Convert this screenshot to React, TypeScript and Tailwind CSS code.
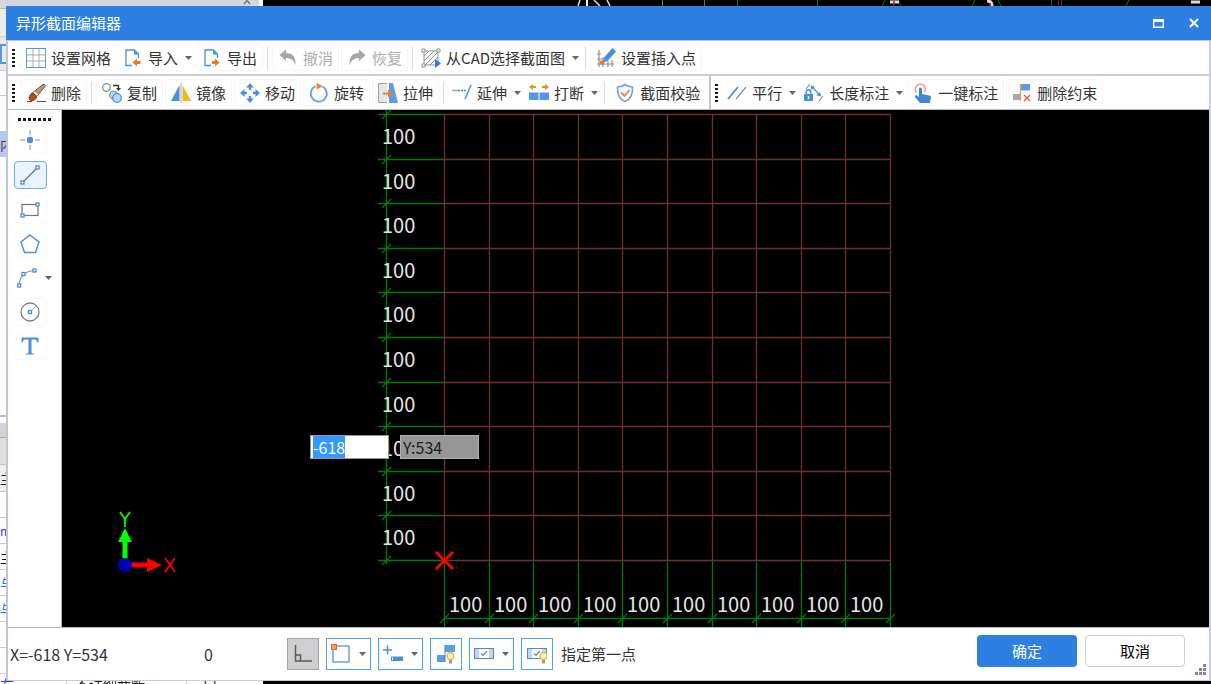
import { useEffect, useRef, type ReactNode } from "react";

const BLUE = "#4a8fdc";
const GREY = "#8a9097";

function Icon({ children }: { children: ReactNode }) {
    return (
        <svg width="20" height="20" viewBox="0 0 20 20" fill="none" className="shrink-0" aria-hidden="true">
            {children}
        </svg>
    );
}

/* ---------- toolbar icons ---------- */

const GridIcon = () => (
    <Icon>
        <path d="M7 1v18M13 1v18M1 7h18M1 13h18" stroke="#a9adb3" />
        <rect x="0.5" y="0.5" width="19" height="19" stroke="#5a97dd" />
    </Icon>
);

const ImportIcon = () => (
    <Icon>
        <path d="M9 17.5H3V2h8.500l4 4v4" stroke={BLUE} strokeWidth="1.300" />
        <path d="M11 2v4.500h4.500z" fill={BLUE} />
        <path d="M9.500 14.500 14 10.500v2.500h3.500v3H14v2.500z" fill="#f47521" />
    </Icon>
);

const ExportIcon = () => (
    <Icon>
        <path d="M9 17.500H3V2h8.500l4 4v4" stroke={BLUE} strokeWidth="1.300" />
        <path d="M11 2v4.500h4.500z" fill={BLUE} />
        <path d="M17.500 14.500 13 10.500v2.500h-3v3h3v2.500z" fill="#f47521" />
    </Icon>
);

const UndoIcon = () => (
    <Icon>
        <path d="M1.500 7 8 1.500V5c6.500 0 10 3.500 9.500 12.500C16 12.500 13 10 8 10v3z" fill="#a6a6a6" />
    </Icon>
);

const RedoIcon = () => (
    <Icon>
        <path d="M18.500 7 12 1.500V5C5.500 5 2 8.500 2.500 17.500 4 12.500 7 10 12 10v3z" fill="#a6a6a6" />
    </Icon>
);

const CadIcon = () => (
    <Icon>
        <rect x="3" y="3" width="14" height="14" stroke={GREY} />
        <path d="M3 8 8 3M3 13 13 3M4 17 17 4M9 17l8-8" stroke={GREY} />
        <path d="M1 1h3v3H1zM16 1h3v3h-3zM1 16h3v3H1z" fill="#fff" stroke={GREY} />
        <path d="M14 11v9l6-4.500z" fill="#2f7cda" />
    </Icon>
);

const InsertPointIcon = () => (
    <Icon>
        <path d="M3 2v17M7 9v10M12 13v6M1 6h4M1 11h5M1 16h17M16 12v7" stroke={GREY} strokeWidth="1.200" />
        <path d="M16.500 0 20 3.500 11.500 13 8 9.500z" fill={BLUE} />
        <path d="m8 9.500 3.500 3.500-5 2z" fill={BLUE} />
        <circle cx="6" cy="14.500" r="2.200" fill="#f47521" />
    </Icon>
);

const EraseIcon = () => (
    <Icon>
        <path d="M1 18.500h5M11 18.500h9" stroke="#555" strokeWidth="1.200" />
        <path d="M17 1.500c1.500-.5 2.500.5 2 2L11 13l-4-3.500z" fill="#c59a63" stroke="#6b5540" />
        <path d="m9 7.500 4 3.500-2 2.500-4.500-3.500z" fill="#e8e6e3" stroke="#555" strokeWidth=".7" />
        <path d="M6 10c2 .5 4 2 4.500 4-1 3-4 4.500-6 3.500S2.500 13 6 10z" fill="#be4716" stroke="#5c3a2a" />
    </Icon>
);

const CopyIcon = () => (
    <Icon>
        <circle cx="4.500" cy="4.500" r="3.800" fill="#fff" stroke={GREY} strokeWidth="1.300" />
        <path d="M11 2.500h5.500V6" stroke="#333" strokeWidth="1.300" />
        <path d="M14 5h5l-2.500 3z" fill="#333" />
        <circle cx="11.500" cy="12" r="4" fill="#b9d8f4" stroke="#4f94d4" />
        <circle cx="15" cy="15" r="4.300" fill="#b9d8f4" stroke="#4f94d4" strokeWidth="1.300" />
    </Icon>
);

const MirrorIcon = () => (
    <Icon>
        <path d="M8.500 2v16H0z" fill={BLUE} />
        <path d="M11.500 2v16H20z" fill="#fdb515" />
        <path d="M10 0v20" stroke="#a9adb3" />
    </Icon>
);

const MoveIcon = () => (
    <Icon>
        <path d="M10 0l4 4.500h-2.800V7H8.800V4.500H6zM10 20l4-4.500h-2.800V13H8.800v2.500H6zM0 10l4.500-4v2.800H7v2.400H4.500V14zM20 10l-4.500-4v2.800H13v2.400h2.500V14z" fill={BLUE} />
    </Icon>
);

const RotateIcon = () => (
    <Icon>
        <path d="M13.500 3.500a8 8 0 1 1-7-.2" stroke="#68a2e3" strokeWidth="1.800" />
        <path d="M7.500 0v6.500L14 3.300z" fill="#ef8a1d" />
    </Icon>
);

const StretchIcon = () => (
    <Icon>
        <path d="M9 .5H.5v19H9" fill="#e3e4ec" stroke="#9ba0a8" />
        <path d="M11 0h4l5 20h-9z" fill="#5b9ce8" />
        <path d="M5 9.500h5V6.500l5 4-5 4v-3H5z" fill="#f17a2a" />
    </Icon>
);

const ExtendIcon = () => (
    <Icon>
        <path d="M0 7.500h6" stroke="#a3a8ae" strokeWidth="1.500" />
        <path d="M6 7.500h8" stroke={BLUE} strokeWidth="1.500" strokeDasharray="2 1" />
        <path d="m19 2-6 14" stroke={BLUE} strokeWidth="1.500" />
    </Icon>
);

const BreakIcon = () => (
    <Icon>
        <path d="M0 9.500h9.500V17H0zM10.500 9.500H20V17h-9.500z" fill="#5596e4" />
        <path d="M0 4l4-3v2h3v2H4v2zM20 4l-4-3v2h-3v2h3v2z" fill="#ef8a1d" />
    </Icon>
);

const ShieldIcon = () => (
    <Icon>
        <path d="M10 1.500c2.500 2 5 2.500 7.500 2.500.5 7-1.500 12-7.500 14.500C4 16 2 11 2.500 4 5 4 7.500 3.500 10 1.500z" fill="#f4f9ff" stroke="#6ea6e4" strokeWidth="1.700" />
        <path d="m6 9.500 3.500 3.500L14.500 7" stroke="#f17a3c" strokeWidth="1.800" />
    </Icon>
);

const ParallelIcon = () => (
    <Icon>
        <path d="M1 16 11 4" stroke={BLUE} strokeWidth="1.800" />
        <path d="M9 16 19 4" stroke={GREY} strokeWidth="1.300" />
    </Icon>
);

const LengthIcon = () => (
    <Icon>
        <path d="M2 6l4-5M15 18l4-5" stroke={GREY} strokeWidth="1.200" />
        <path d="m8 4 8 8" stroke={BLUE} strokeWidth="1.300" />
        <path d="M6.500 2.500 11 3.500 7.500 7zM17 13.500l-4.500-1L16 9z" fill={BLUE} />
        <path d="M0 11h9v7H0z" fill={BLUE} />
        <path d="M2.200 11V9a2.300 2.300 0 0 1 4.600 0v2" stroke={BLUE} strokeWidth="1.500" />
        <path d="M4.500 13v3" stroke="#fff" strokeWidth="1.500" />
    </Icon>
);

const TapIcon = () => (
    <Icon>
        <path d="M3.500 9.500a5 5 0 1 1 8-.5" stroke="#f3a07a" strokeWidth="1.600" />
        <path d="M6 6c0-1.800 3-1.800 3 0v5l7.500 1.500c1 .3 1.500 1 1.300 2L17 20H7l-5-6c-.8-1.300.8-2.300 2-1.500l2 1.500z" fill="#3f86d8" />
    </Icon>
);

const RemoveLinkIcon = () => (
    <Icon>
        <path d="M1 11h7v6H1z" fill="#a5aab2" />
        <path d="M9 1h9v6.500H9z" fill="#5b9ce8" />
        <path d="M8.500 1v17" stroke="#ef9a3d" strokeWidth="1.300" />
        <path d="m12 12 6 6m0-6-6 6" stroke="#e8543a" strokeWidth="1.300" />
    </Icon>
);

/* ---------- drawing tool icons ---------- */

const node = { width: 3, height: 3, fill: "#fff", stroke: BLUE, strokeWidth: 1.3 };

const PointIcon = () => (
    <Icon>
        <path d="M10 0v5M10 15v5M0 10h5M15 10h5" stroke={GREY} />
        <circle cx="10" cy="10" r="3.200" fill={BLUE} />
    </Icon>
);

const LineIcon = () => (
    <Icon>
        <path d="M3 17 17 3" stroke="#6c747c" strokeWidth="1.300" />
        <rect x="1" y="16" {...node} />
        <rect x="16" y="1" {...node} />
    </Icon>
);

const RectIcon = () => (
    <Icon>
        <rect x="2" y="4.500" width="16" height="11" stroke="#6c747c" strokeWidth="1.200" />
        <rect x="1" y="14" {...node} />
        <rect x="16" y="3" {...node} />
    </Icon>
);

const PolygonIcon = () => (
    <Icon>
        <path d="m10 1 9 7-3.500 10.500h-11L1 8z" stroke={BLUE} strokeWidth="1.400" />
    </Icon>
);

const ArcIcon = () => (
    <Icon>
        <path d="M2 17C2.500 9 8 3 17 2.500" stroke={GREY} strokeWidth="1.200" />
        <rect x="0.700" y="16" {...node} />
        <rect x="5" y="4.500" {...node} />
        <rect x="16" y="1" {...node} />
    </Icon>
);

const CircleIcon = () => (
    <Icon>
        <circle cx="10" cy="10" r="9" stroke="#7b828a" strokeWidth="1.300" />
        <path d="m10 10 5.500-5.500" stroke="#7fb0e8" />
        <rect x="8.500" y="8.500" {...node} />
    </Icon>
);

const TextIcon = () => (
    <Icon>
        <path d="M1.500 1.500h17v5h-1.200c-.3-2-1-3-3-3h-2.800V16c0 1 .5 1.500 2.500 1.500v1H6v-1c2 0 2.500-.5 2.500-1.500V3.500H5.700c-2 0-2.700 1-3 3H1.500z" fill={BLUE} />
    </Icon>
);

/* ---------- status bar icons ---------- */

const OrthoIcon = () => (
    <Icon>
        <path d="M2.500 1v16H19M2.500 11h5v6" stroke="#5c5c5c" strokeWidth="1.500" />
    </Icon>
);

const SnapIcon = () => (
    <Icon>
        <rect x="2" y="2" width="16" height="16" stroke="#5b92d6" strokeWidth="1.300" />
        <rect x="0.500" y="0.500" width="5" height="5" fill="#f79a63" stroke="#e66a25" />
    </Icon>
);

const PlusInputIcon = () => (
    <Icon>
        <path d="M0 6h9M4.500 1.500v9" stroke={BLUE} strokeWidth="1.500" />
        <path d="M8 12.500h12V17H8z" fill={BLUE} />
        <path d="M9.500 13.500v2.500" stroke="#fff" />
    </Icon>
);

const Bulb = () => (
    <>
        <circle cx="14.500" cy="12" r="3.500" fill="#fff3c4" stroke="#f3b83b" strokeWidth="1.400" />
        <path d="M13 16h3v3.500h-3z" fill="#9a9a9a" />
    </>
);

const BlocksBulbIcon = () => (
    <Icon>
        <path d="M9 1h10v7H9zM1 11h8v7H1z" fill="#5b9ce8" />
        <path d="M9 1v17" stroke="#3f7fca" />
        <Bulb />
    </Icon>
);

const CheckBox = () => (
    <>
        <rect x="0.500" y="4.500" width="19" height="10" fill="#bcd5f2" stroke="#4f88cc" />
        <path d="M5 5h10v9H5z" fill="#fff" />
        <path d="m7 9.500 2 2 4-4.500" stroke="#4f88cc" strokeWidth="1.200" />
    </>
);

const CheckIcon = () => (
    <Icon>
        <CheckBox />
    </Icon>
);

const CheckBulbIcon = () => (
    <Icon>
        <CheckBox />
        <g transform="translate(2)">
            <Bulb />
        </g>
    </Icon>
);

/* ---------- small parts ---------- */

function Caret() {
    return (
        <svg width="7" height="4" viewBox="0 0 7 4" className="shrink-0" aria-hidden="true">
            <path d="M0 0h7L3.500 4z" fill="#666" />
        </svg>
    );
}

function Grip() {
    return (
        <div className="mr-[3px] flex shrink-0 flex-col gap-0.5">
            {[0, 1, 2, 3, 4].map((i) => (
                <span key={i} className="h-0.5 w-[3px] bg-[#1a1a1a]" />
            ))}
        </div>
    );
}

function Separator() {
    return <div className="mx-0.5 h-[22px] w-px shrink-0 bg-[#dcdcdc]" />;
}

type ToolProps = { icon: ReactNode; label: string; menu?: boolean; disabled?: boolean };

function Tool({ icon, label, menu, disabled }: ToolProps) {
    return (
        <button
            type="button"
            disabled={disabled}
            className={
                "flex h-[27px] shrink-0 items-center gap-[5px] whitespace-nowrap rounded hover:bg-[#e8f2fd] disabled:text-[#adadad] " +
                (menu ? "pr-0.5 pl-1" : "px-1.5 shadow-[inset_0_0_0_1px_#f8f6f7]")
            }
        >
            {icon}
            <span>{label}</span>
            {menu && (
                <span className="ml-0.5 flex">
                    <Caret />
                </span>
            )}
        </button>
    );
}

const drawTools = [
    { name: "点", icon: <PointIcon /> },
    { name: "直线", icon: <LineIcon />, active: true },
    { name: "矩形", icon: <RectIcon /> },
    { name: "多边形", icon: <PolygonIcon /> },
    { name: "圆弧", icon: <ArcIcon />, menu: true },
    { name: "圆", icon: <CircleIcon /> },
    { name: "文字", icon: <TextIcon /> },
];

const statusTools = [
    { name: "正交", icon: <OrthoIcon />, pressed: true },
    { name: "对象捕捉", icon: <SnapIcon />, menu: true },
    { name: "动态输入", icon: <PlusInputIcon />, menu: true },
    { name: "约束显示", icon: <BlocksBulbIcon /> },
    { name: "标注", icon: <CheckIcon />, menu: true },
    { name: "标注显示", icon: <CheckBulbIcon /> },
];

/* ---------- drawing area ---------- */

const CELL = 44.6;
const LEFT = 382;
const TOP = 4;
const SIZE = CELL * 10;
const steps = Array.from({ length: 11 }, (_, i) => Math.round(i * CELL));
const cells = steps.slice(0, 10);

function Drawing() {
    const bottom = TOP + SIZE;
    return (
        <svg className="absolute inset-0 h-full w-full" role="img" aria-label="截面网格">
            <g stroke="#6f2f31" strokeWidth="1.300">
                {steps.map((s) => (
                    <path key={s} d={`M${LEFT + s + 0.5} ${TOP}V${bottom}M${LEFT} ${TOP + s + 0.5}H${LEFT + SIZE}`} />
                ))}
            </g>
            <g stroke="#007a00" strokeWidth="1.300">
                <path d={`M324.500 0V${bottom + 4}M${LEFT} 508.500H${LEFT + SIZE}`} />
                {steps.map((s) => (
                    <path
                        key={s}
                        d={`M316 ${TOP + s + 0.5}H${LEFT}M320 ${TOP + s + 5}l9-9M${LEFT + s + 0.5} ${bottom}V520M${LEFT + s - 4} 513l9-9`}
                    />
                ))}
            </g>
            <g fill="#e6e6e6" fontSize="20">
                {cells.map((s) => (
                    <text key={s} x="320" y={TOP + s + 30}>
                        100
                    </text>
                ))}
                {cells.map((s) => (
                    <text key={s} x={LEFT + s + 5} y="502">
                        100
                    </text>
                ))}
            </g>
            <path d="m374 442 17 17m0-17-17 17" stroke="#f00" strokeWidth="3" />

            {/* UCS axes */}
            <path d="M63 450V432" stroke="#0f0" strokeWidth="5" />
            <path d="M56 432h14l-7-14z" fill="#0f0" />
            <path d="M68 455h18" stroke="#f00" strokeWidth="5" />
            <path d="M85 448v14l15-7z" fill="#f00" />
            <circle cx="63" cy="455" r="7" fill="#0000b8" />
            <path d="m58 402 5 7 5-7M63 409v8" stroke="#0f0" strokeWidth="1.800" fill="none" />
            <path d="m103 448 10 14m0-14-10 14" stroke="#f00" strokeWidth="1.800" />
        </svg>
    );
}

function Backdrop() {
    return (
        <div className="absolute inset-0 -z-10 flex overflow-hidden bg-black" aria-hidden="true">
            <div className="flex w-[263px] shrink-0 flex-col overflow-hidden bg-white text-sm leading-[26px]">
                <div className="mr-1 flex h-[9px] shrink-0 justify-end border-b border-[#b8b8bc] bg-[#d6d6dc] pr-2">
                    <svg width="8" height="5" viewBox="0 0 8 5" fill="none">
                        <path d="M1-3l6 7M7-3 1 4" stroke="#777" strokeWidth="1.500" />
                    </svg>
                </div>
                <div className="h-7 shrink-0 border-b border-[#cfcfcf] bg-[#ededed]" />
                <div className="flex h-[34px] shrink-0 items-center border-b border-[#c8c8c8] bg-[#e8e8ea]">
                    <span className="h-5 w-2 border-2 border-[#5a97dd]" />
                </div>
                <div className="h-[25px] shrink-0 border-b border-[#c8c8d8]" />
                <div className="h-[35px] shrink-0" />
                <div className="h-[26px] shrink-0 bg-[#b5c8ea] text-[#5a2f70]">内</div>
                <div className="h-[260px] shrink-0 border-b-2 border-[#bdbdbd]" />
                <div className="mt-1.5 h-[15px] shrink-0 border-b border-[#aaa] bg-[#d3d3da]" />
                <div className="h-[27px] shrink-0 border-b border-[#c4c4c4] bg-[#dfdfdf]" />
                <div className="h-[27px] shrink-0 border-b border-[#c4c4c4] bg-[#eee] text-[#222]">主</div>
                <div className="h-[26px] shrink-0 border-b border-[#ccc]" />
                <div className="h-[26px] shrink-0 border-b border-[#ccc] text-xs leading-[26px] text-[#2343e8]">m</div>
                <div className="h-[26px] shrink-0 border-b border-[#ccc] text-black">主</div>
                <div className="h-[26px] shrink-0 border-b border-[#ccc] text-[#1f6bff]">与</div>
                <div className="h-[26px] shrink-0 border-b border-[#ccc] text-[#1f6bff]">与</div>
                <div className="h-[26px] shrink-0 border-b border-[#ccc]" />
                <div className="h-[26px] shrink-0 border-b border-[#ccc]" />
                <div className="flex h-[26px] shrink-0 leading-5">
                    <span className="w-[67px] border-r border-[#ccc] text-[#2343e8]">左</span>
                    <span className="w-[120px] border-r border-[#ccc] pl-2 text-[#222]">不详细截断</span>
                    <span className="pl-4 text-[#222]">口</span>
                </div>
            </div>
            <svg className="h-1.5 flex-1" fill="none">
                <path d="M317 0l-2 6M344 0l3 6M331 0l6 6" stroke="#ddd" strokeWidth="1.500" />
                <path d="M324 0v6" stroke="#fff" strokeWidth="2" />
                <path d="M399.500 0v6M441.500 0v6" stroke="#7d7a35" />
                <path d="M474.500 0v6M554.500 0v6M622 0l-3 6M635 0l3 6M712 0l-3 6M735 0l3 6M866 0l-3 6M961 0l-3 6" stroke="#0a7a0a" />
                <path d="M627 2h9M724 1q5 0 5 5M928 2h9" stroke="#e5d9d9" strokeWidth="3" />
                <path d="M631 1v5M727 3v3" stroke="#a22" strokeWidth="1.500" />
                <path d="M788.500 0v6M798.500 0v6" stroke="#0c5a80" />
                <path d="M795.500 0v6" stroke="#9b1010" />
            </svg>
        </div>
    );
}

export default function App() {
    const xField = useRef<HTMLInputElement>(null);

    useEffect(() => {
        xField.current?.focus();
        xField.current?.select();
    }, []);

    return (
        <div className="relative isolate flex h-screen flex-col overflow-hidden pt-1.5 pb-[3px] pl-1.5 font-['Noto_Sans_CJK_SC','Noto_Sans',sans-serif] text-[15px] leading-5 text-[#333]">
            <Backdrop />

            <header className="flex h-[34px] shrink-0 items-center bg-[#2d80e2] pl-2.5 text-white">
                <h1 className="flex-1">异形截面编辑器</h1>
                <button type="button" aria-label="最大化" className="flex h-full w-[35px] items-center justify-center">
                    <svg width="11" height="9" viewBox="0 0 11 9" fill="none">
                        <path d="M.7 1v7.300h9.600V1" stroke="#fff" strokeWidth="1.400" />
                        <path d="M0 0h11v3H0z" fill="#fff" />
                    </svg>
                </button>
                <button type="button" aria-label="关闭" className="flex h-full w-[35px] items-center justify-center">
                    <svg width="10" height="10" viewBox="0 0 10 10">
                        <path d="m1 1 8 8m0-8L1 9" stroke="#fff" strokeWidth="2" />
                    </svg>
                </button>
            </header>

            <main className="flex min-h-0 flex-1 flex-col border-t border-r-2 border-b border-l-2 border-t-[#b9c3d6] border-r-[#c5d3e6] border-b-[#c5cbdb] border-l-[#c0c6d6] bg-white">
                <div className="flex h-[35px] shrink-0 items-center gap-0.5 border-b-2 border-[#cacdd4] pl-1">
                    <Grip />
                    <Tool icon={<GridIcon />} label="设置网格" />
                    <Tool icon={<ImportIcon />} label="导入" menu />
                    <Tool icon={<ExportIcon />} label="导出" />
                    <Separator />
                    <Tool icon={<UndoIcon />} label="撤消" disabled />
                    <Tool icon={<RedoIcon />} label="恢复" disabled />
                    <Separator />
                    <Tool icon={<CadIcon />} label="从CAD选择截面图" menu />
                    <Separator />
                    <Tool icon={<InsertPointIcon />} label="设置插入点" />
                </div>

                <div className="flex h-[34px] shrink-0 border-b border-[#b5b8be]">
                    <div className="flex items-center gap-0.5 border-r-2 border-[#c5c8d0] pr-[3px] pl-1">
                        <Grip />
                        <Tool icon={<EraseIcon />} label="删除" />
                        <Separator />
                        <Tool icon={<CopyIcon />} label="复制" />
                        <Tool icon={<MirrorIcon />} label="镜像" />
                        <Tool icon={<MoveIcon />} label="移动" />
                        <Tool icon={<RotateIcon />} label="旋转" />
                        <Tool icon={<StretchIcon />} label="拉伸" />
                        <Separator />
                        <Tool icon={<ExtendIcon />} label="延伸" menu />
                        <Tool icon={<BreakIcon />} label="打断" menu />
                        <Separator />
                        <Tool icon={<ShieldIcon />} label="截面校验" />
                    </div>
                    <div className="flex items-center gap-0.5 pl-1">
                        <Grip />
                        <Tool icon={<ParallelIcon />} label="平行" menu />
                        <Tool icon={<LengthIcon />} label="长度标注" menu />
                        <Tool icon={<TapIcon />} label="一键标注" />
                        <Tool icon={<RemoveLinkIcon />} label="删除约束" />
                    </div>
                </div>

                <div className="flex min-h-0 flex-1">
                    <aside className="flex w-[54px] shrink-0 flex-col gap-1.5 border-r border-[#b5b8be] pt-2 pl-1.5">
                        <div className="mb-[-1px] ml-1 flex gap-0.5">
                            {[0, 1, 2, 3, 4, 5, 6].map((i) => (
                                <span key={i} className="size-[3px] bg-[#1a1a1a]" />
                            ))}
                        </div>
                        {drawTools.map((t) => (
                            <div key={t.name} className={"flex items-center " + (t.active ? "my-px" : "")}>
                                <button
                                    type="button"
                                    aria-label={t.name}
                                    className={
                                        "flex h-7 w-[33px] shrink-0 items-center rounded border " +
                                        (t.menu ? "pl-0.5 " : "justify-center pr-0.5 ") +
                                        (t.active ? "border-[#6cb1f5] bg-[#e9f3fd]" : t.menu ? "border-transparent" : "border-[#faf8f9]")
                                    }
                                >
                                    {t.icon}
                                </button>
                                {t.menu && (
                                    <button type="button" aria-label={t.name + "选项"} className="-ml-0.5">
                                        <Caret />
                                    </button>
                                )}
                            </div>
                        ))}
                    </aside>

                    <section className="relative min-w-0 flex-1 overflow-hidden bg-black">
                        <Drawing />
                        <input
                            ref={xField}
                            aria-label="X"
                            defaultValue="-618"
                            className="absolute top-[325px] left-[248px] h-6 w-[79px] border border-[#999] bg-white px-0.5 text-base text-black outline-none selection:bg-[#3399ff] selection:text-white"
                        />
                        <input
                            aria-label="Y"
                            defaultValue="Y:534"
                            className="absolute top-[325px] left-[338px] h-6 w-[79px] border border-[#b0b0b0] bg-[#969696] px-0.5 text-base text-[#1c1c1c] outline-none"
                        />
                    </section>
                </div>

                <footer className="flex h-[53px] shrink-0 border-t border-[#b5b8be]">
                    <div className="flex flex-1 items-center pl-0.5">
                        <output className="w-[194px] text-base">X=-618 Y=534</output>
                        <output className="w-[83px] text-base">0</output>
                        <div className="flex gap-[7px]">
                            {statusTools.map((t) => (
                                <button
                                    key={t.name}
                                    type="button"
                                    aria-label={t.name}
                                    className={
                                        "flex h-8 items-center justify-center border " +
                                        (t.menu ? "w-[45px] gap-2 " : "w-8 ") +
                                        (t.pressed ? "border-[#a3a3a3] bg-[#cfcfd1]" : "border-[#4ba3f9] bg-white")
                                    }
                                >
                                    {t.icon}
                                    {t.menu && <Caret />}
                                </button>
                            ))}
                        </div>
                        <p className="ml-2">指定第一点</p>
                    </div>
                    <div className="flex gap-2 pt-[7px]">
                        <button type="button" className="h-8 w-[100px] rounded bg-[#2d80e2] text-white">
                            确定
                        </button>
                        <button type="button" className="h-8 w-[100px] rounded border border-[#cfcfcf] bg-white text-black">
                            取消
                        </button>
                    </div>
                    <svg width="11" height="11" viewBox="0 0 11 11" className="mr-[3px] mb-[5px] ml-[10px] self-end" aria-hidden="true">
                        <path d="M8 0h3v3H8zM4 4h3v3H4zM8 4h3v3H8zM0 8h3v3H0zM4 8h3v3H4zM8 8h3v3H8z" fill="#82879a" />
                    </svg>
                </footer>
            </main>
        </div>
    );
}
